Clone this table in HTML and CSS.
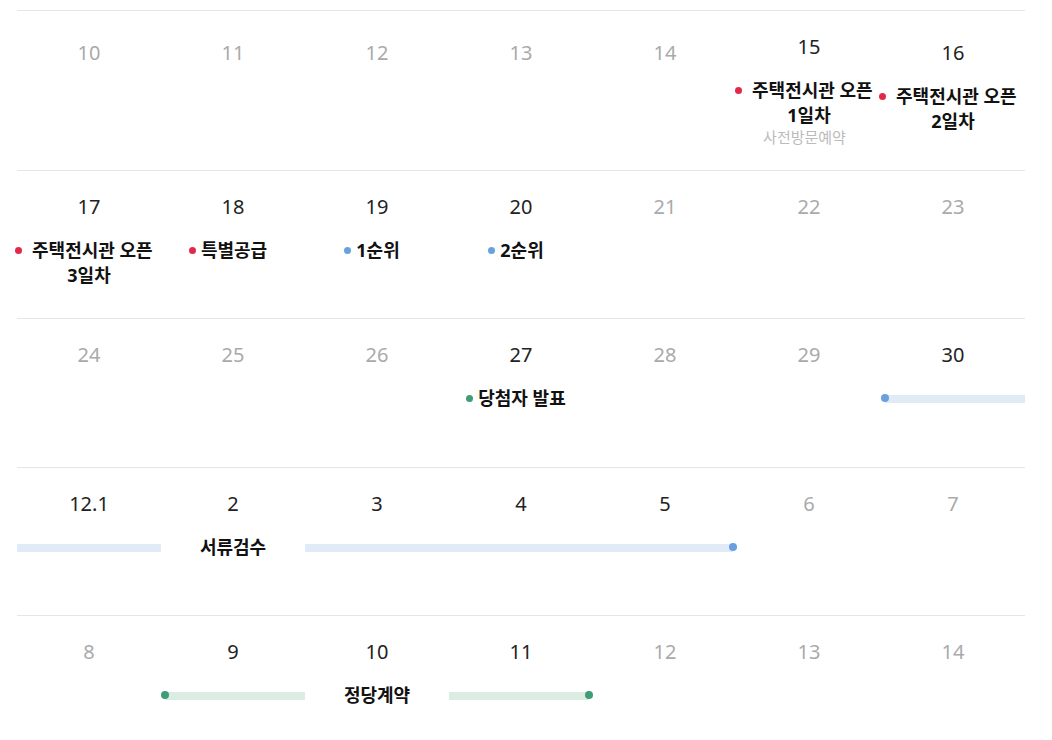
FILE: index.html
```html
<!DOCTYPE html>
<html lang="ko">
<head>
<meta charset="utf-8">
<link rel="stylesheet" href="styles.css">
</head>
<body>
<div class="cal">
  <div class="week">
    <div class="day"><div class="num off">10</div><div class="evs"></div></div>
    <div class="day"><div class="num off">11</div><div class="evs"></div></div>
    <div class="day"><div class="num off">12</div><div class="evs"></div></div>
    <div class="day"><div class="num off">13</div><div class="evs"></div></div>
    <div class="day"><div class="num off">14</div><div class="evs"></div></div>
    <div class="day"><div class="num">15</div><div class="evs"><div class="ev"><span class="dot red"></span>&nbsp;주택전시관 오픈<br>1일차</div><div class="sub">사전방문예약</div></div></div>
    <div class="day"><div class="num">16</div><div class="evs"><div class="ev"><span class="dot red"></span>&nbsp;주택전시관 오픈<br>2일차</div></div></div>
  </div>
  <div class="week">
    <div class="day"><div class="num">17</div><div class="evs"><div class="ev"><span class="dot red"></span>&nbsp;주택전시관 오픈<br>3일차</div></div></div>
    <div class="day"><div class="num">18</div><div class="evs"><div class="ev"><span class="dot red"></span>특별공급</div></div></div>
    <div class="day"><div class="num">19</div><div class="evs"><div class="ev"><span class="dot blue"></span>1순위</div></div></div>
    <div class="day"><div class="num">20</div><div class="evs"><div class="ev"><span class="dot blue"></span>2순위</div></div></div>
    <div class="day"><div class="num off">21</div><div class="evs"></div></div>
    <div class="day"><div class="num off">22</div><div class="evs"></div></div>
    <div class="day"><div class="num off">23</div><div class="evs"></div></div>
  </div>
  <div class="week tall">
    <div class="day"><div class="num off">24</div><div class="evs"></div></div>
    <div class="day"><div class="num off">25</div><div class="evs"></div></div>
    <div class="day"><div class="num off">26</div><div class="evs"></div></div>
    <div class="day"><div class="num">27</div><div class="evs"><div class="ev"><span class="dot green"></span>당첨자 발표</div></div></div>
    <div class="day"><div class="num off">28</div><div class="evs"></div></div>
    <div class="day"><div class="num off">29</div><div class="evs"></div></div>
    <div class="day"><div class="num">30</div><div class="evs"><div class="bar blue start"><span class="bdot"></span></div></div></div>
  </div>
  <div class="week">
    <div class="day"><div class="num">12.1</div><div class="evs"><div class="bar blue"></div></div></div>
    <div class="day"><div class="num">2</div><div class="evs"><div class="ev label">서류검수</div></div></div>
    <div class="day"><div class="num">3</div><div class="evs"><div class="bar blue"></div></div></div>
    <div class="day"><div class="num">4</div><div class="evs"><div class="bar blue"></div></div></div>
    <div class="day"><div class="num">5</div><div class="evs"><div class="bar blue end"><span class="bdot"></span></div></div></div>
    <div class="day"><div class="num off">6</div><div class="evs"></div></div>
    <div class="day"><div class="num off">7</div><div class="evs"></div></div>
  </div>
  <div class="week">
    <div class="day"><div class="num off">8</div><div class="evs"></div></div>
    <div class="day"><div class="num">9</div><div class="evs"><div class="bar green start"><span class="bdot"></span></div></div></div>
    <div class="day"><div class="num">10</div><div class="evs"><div class="ev label">정당계약</div></div></div>
    <div class="day"><div class="num">11</div><div class="evs"><div class="bar green end"><span class="bdot"></span></div></div></div>
    <div class="day"><div class="num off">12</div><div class="evs"></div></div>
    <div class="day"><div class="num off">13</div><div class="evs"></div></div>
    <div class="day"><div class="num off">14</div><div class="evs"></div></div>
  </div>
</div>
</body>
</html>
```
FILE: styles.css
```css
* { box-sizing: border-box; }
html, body { margin: 0; padding: 0; background: #fff; }
body {
  font-family: "Noto Sans", "Noto Sans CJK KR", sans-serif;
  color: #111;
}
.cal {
  width: 1008px;
  margin-left: 17px;
  padding-top: 10px;
}
.week {
  display: grid;
  grid-template-columns: repeat(7, 144px);
  align-items: center;
  border-top: 1px solid #e6e6e6;
}
.week.tall .day { padding-bottom: 25px; }
.day {
  padding: 23px 0 24px;
  text-align: center;
}
.num {
  font-size: 20px;
  line-height: 26px;
  height: 26px;
  color: #222;
  font-weight: 400;
}
.num.off { color: #aaa; }
.evs {
  margin-top: 18px;
  min-height: 56px;
}
.ev {
  font-family: "Noto Sans", "Noto Sans CJK KR", sans-serif;
  font-size: 18px;
  line-height: 25px;
  font-weight: 700;
  color: #111;
  text-align: center;
  white-space: nowrap;
}
.dot {
  display: inline-block;
  width: 7px;
  height: 7px;
  border-radius: 50%;
  margin-left: -10px;
  margin-right: 5px;
  vertical-align: 3px;
}
.dot.red { background: #e2294b; }
.dot.blue { background: #6a9fe0; }
.dot.green { background: #3e9c77; }
.sub {
  font-family: "Noto Sans", "Noto Sans CJK KR", sans-serif;
  font-size: 15px;
  line-height: 18px;
  color: #bbb;
  padding-right: 9px;
}
.bar {
  height: 25px;
  display: flex;
  align-items: center;
  position: relative;
}
.bar::before {
  content: "";
  display: block;
  height: 8px;
  width: 100%;
}
.bar.blue::before { background: #e1ebf7; }
.bar.green::before { background: #dbece3; }
.bar.start::before { margin-left: 4px; }
.bar.end::before { margin-right: 4px; }
.bdot {
  position: absolute;
  top: 8px;
  width: 8px;
  height: 8px;
  border-radius: 50%;
}
.bar.start .bdot { left: 0; }
.bar.end .bdot { right: 0; }
.bar.blue .bdot { background: #6a9fe0; }
.bar.green .bdot { background: #3e9c77; }
```
